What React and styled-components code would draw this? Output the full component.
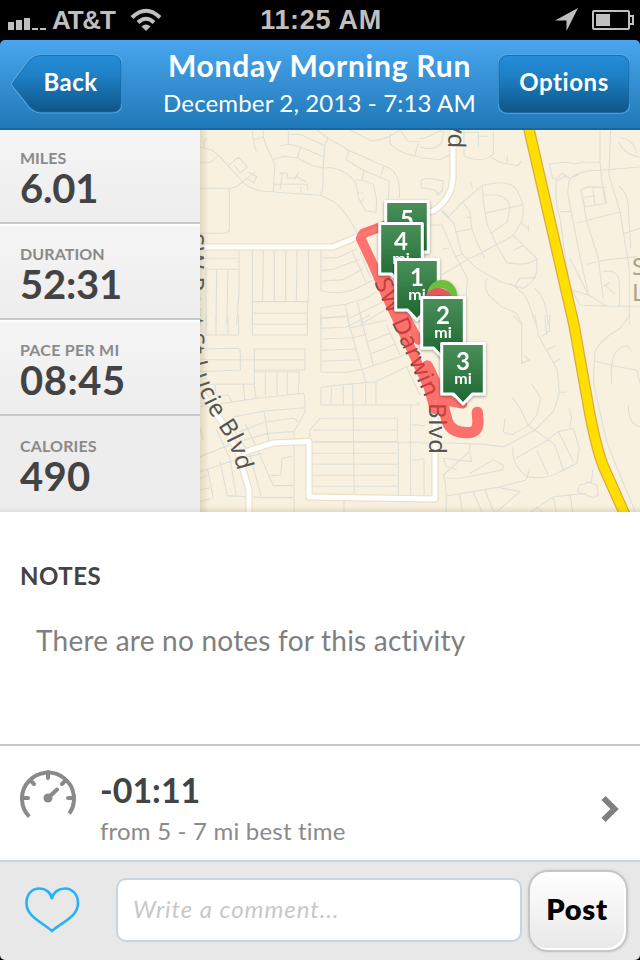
import React from "react";
import styled, { createGlobalStyle } from "styled-components";

const GlobalStyle = createGlobalStyle`
  * {
    box-sizing: border-box;
  }
  body {
    margin: 0;
    background: #000;
    font-family: "Lato", sans-serif;
  }
  h1, h2, h3, p {
    margin: 0;
  }
`;

const Screen = styled.div`
  width: 640px;
  height: 960px;
  display: flex;
  flex-direction: column;
  overflow: hidden;
  background: #000;
`;

const StatusBar = styled.div`
  height: 40px;
  display: grid;
  grid-template-columns: 1fr auto 1fr;
  align-items: center;
  padding: 0 6px 0 8px;
  color: #bfbfbf;
  font-family: "Liberation Sans", sans-serif;
  font-weight: 700;
  font-size: 26px;
  line-height: 40px;

  svg {
    display: block;
  }
`;
const Signal = styled.div`
  display: flex;
  align-items: center;

  span {
    width: 83px;
    letter-spacing: -1.2px;
    padding-left: 6px;
  }
`;
const Clock = styled.div`
  font-size: 27px;
  letter-spacing: 0.7px;
`;
const Power = styled.div`
  display: flex;
  justify-content: flex-end;
  align-items: center;
  gap: 13px;
`;

const Header = styled.header`
  height: 90px;
  flex: none;
  display: flex;
  justify-content: space-between;
  padding: 14px 10px 0 11px;
  border-radius: 5px 5px 0 0;
  border-bottom: 2px solid #1567a6;
  background: linear-gradient(#49a6ee, #2078b6);
  color: #fff;
`;
const Titles = styled.div`
  margin-left: 19px;
  text-align: center;
  white-space: nowrap;

  h1 {
    font-size: 30px;
    font-weight: 700;
    line-height: 36px;
    margin-top: -7px;
    letter-spacing: 0.75px;
  }
  p {
    font-size: 24px;
    line-height: 30px;
    margin-top: 5px;
    letter-spacing: 0.15px;
  }
`;
const HeaderButton = styled.button`
  position: relative;
  height: 60px;
  width: ${(props) => props.$width}px;
  padding: ${(props) => (props.$back ? "0 0 6px 8px" : "0 0 6px")};
  border: 0;
  background: none;
  color: #fff;
  font-family: inherit;
  font-size: 24px;
  font-weight: 700;
  letter-spacing: ${(props) => props.$spacing}px;

  svg {
    position: absolute;
    left: 0;
    top: 0;
  }
  span {
    position: relative;
  }
`;

const Summary = styled.section`
  height: 382px;
  flex: none;
  display: flex;
`;
const Stats = styled.div`
  width: 200px;
  display: flex;
  flex-direction: column;
  background: #ededed;
`;
const Stat = styled.div`
  height: 96px;
  padding: 19px 20px 0;
  background: linear-gradient(#f5f5f5, #ededed);
  border-top: 2px solid #fff;
  border-bottom: 2px solid #c8c8c8;

  &:first-child {
    height: 94px;
    border-top: 0;
  }
  &:last-child {
    padding-top: 21px;
    border: 0;
    background: linear-gradient(#ededed 94%, #e2e2e2);
  }
  h3 {
    font-size: 16px;
    font-weight: 700;
    line-height: 18px;
    color: #8a8a8a;
    letter-spacing: ${(props) => props.$labelSpacing}px;
  }
  p {
    font-size: 40px;
    font-weight: 700;
    line-height: 42px;
    color: #434343;
    letter-spacing: ${(props) => props.$spacing}px;
  }
`;
const MapArea = styled.div`
  flex: 1;

  svg {
    display: block;
  }
`;

const Notes = styled.section`
  height: 232px;
  flex: none;
  padding: 49px 20px 0;
  background: #fff;

  h2 {
    font-size: 24px;
    font-weight: 700;
    line-height: 30px;
    color: #434343;
    letter-spacing: 0.5px;
  }
  p {
    margin: 32px 0 0 16px;
    font-size: 28px;
    line-height: 34px;
    color: #7f7f7f;
    letter-spacing: 0.23px;
  }
`;
const BestTime = styled.section`
  height: 116px;
  flex: none;
  display: flex;
  padding: 22px 20px 0;
  border-top: 2px solid #c8c8c8;
  background: #fff;

  h2 {
    font-size: 34px;
    font-weight: 700;
    line-height: 42px;
    margin-top: 1px;
    color: #434343;
    letter-spacing: 0;
  }
  p {
    font-size: 24px;
    line-height: 30px;
    margin-top: 5px;
    color: #8a8a8a;
    letter-spacing: 0.2px;
  }
`;
const BestText = styled.div`
  flex: 1;
  margin-left: 24px;
`;
const Chevron = styled.svg`
  margin-top: 27px;
`;

const CommentBar = styled.footer`
  height: 100px;
  flex: none;
  display: flex;
  align-items: flex-start;
  padding: 8px 12px 0 24px;
  border-top: 2px solid #c8d3dd;
  border-radius: 0 0 5px 5px;
  background: #e8e8e8;
`;
const Heart = styled.svg`
  flex: none;
  margin: 16px 36px 0 0;
`;
const CommentInput = styled.input`
  width: 406px;
  height: 64px;
  margin-top: 8px;
  padding: 0 15px 3px;
  border: 2px solid #c8d5e1;
  border-radius: 10px;
  background: #fff;
  outline: 0;
  font-family: inherit;
  font-size: 24px;
  letter-spacing: 0.95px;

  &::placeholder {
    color: #c8c8c8;
    font-style: italic;
    opacity: 1;
  }
`;
const PostButton = styled.button`
  width: 100px;
  height: 82px;
  margin-left: 6px;
  padding: 0 2px 5px 0;
  border: 2px solid #c6c6c6;
  border-radius: 20px;
  background: linear-gradient(#fff, #e8e8e8);
  box-shadow: inset -2px -2px 0 #fff, 0 0 3px rgba(0, 0, 0, 0.12);
  color: #000;
  font-family: inherit;
  font-size: 29px;
  font-weight: 800;
  letter-spacing: 0.7px;
`;

const stats = [
  { label: "MILES", value: "6.01", spacing: -0.2, labelSpacing: 0 },
  { label: "DURATION", value: "52:31", spacing: -0.2, labelSpacing: 0.1 },
  { label: "PACE PER MI", value: "08:45", spacing: 0.5, labelSpacing: 0.25 },
  { label: "CALORIES", value: "490", spacing: 0.3, labelSpacing: 0.15 },
];

// side streets, grouped by quarter of the map
const northWest =
  "M0 66L35 75L60 95L80 118L110 150L135 178Q155 192 185 198L260 204L362 211L405 232Q440 262 474 328M0 112H32L55 92M12 66V50L18 38M0 190H88V318L75 325H0M88 190L108 186L135 165L165 142M84 122L115 97L142 126L120 144L102 120M146 142L170 155L162 173L136 158M156 18L164 66L169 80M163 44L190 36V18M190 36L200 66L225 118L220 202M220 104L250 94L292 98L302 66L370 95M240 62L268 58L302 66M265 18V56M265 28H300L375 62L385 36M350 15L385 40L446 76L550 122Q605 135 598 218M385 36L374 64L370 125L368 190L362 211M292 98Q330 124 368 128H395Q445 138 468 175L476 220L497 258L528 262L530 225L520 178L488 166H468M446 76L438 104L492 137L568 168L565 222M492 137L486 166M552 122L543 152M474 204H490M480 232L494 218M220 178H322V196M240 194L247 147L238 144H262V158L286 160L296 142M286 154L318 170M303 185V202M450 15L510 46Q550 50 600 15M570 25V55Q600 88 660 95M600 15L625 50H660M645 90L655 55" +
  "M0 370V375M18 435V600M0 400H116M0 433H116M117 372V500L110 600M50 435L48 600M84 435L80 600M157 375V600M190 375L188 530M223 375V530M257 375V530M291 375L289 530M325 375V530M157 530H322V600M157 565H322M363 375V497M363 400L412 398L470 372M363 436L400 433L480 402M363 469L430 464L488 432M363 497Q430 515 490 480L530 460M457 380L498 470M480 380L512 460M363 600V548L436 538L498 520L530 500M363 577H440M436 538L448 600M472 532L490 600M448 580L550 530M480 600L562 550";
const northEast =
  "M0 42Q30 35 48 22L68 18M0 66Q45 80 65 52L72 18M0 98L60 104L100 84M4 164L25 160L70 168L67 197L48 210M4 188L42 194L60 212M4 164V188M130 22H175V66M175 34H205M220 18V88Q190 112 150 100L132 92V15M214 98L240 112L294 122L304 108M262 94V112M150 170L158 190M65 255L85 276L128 231L187 182Q270 160 290 195Q320 245 305 290L280 332L182 385L140 405L65 450M187 182L190 230L202 300L230 360L260 413Q330 425 350 400L280 332M187 209L236 210Q268 222 270 250L262 290L212 325M198 264L305 240M128 231L150 260L155 310L170 350L194 400M140 276L155 279M105 322L158 311M65 260L102 295L125 385L170 430L240 470L310 490Q345 470 350 440V400M305 295L325 310M325 300V320M282 375L308 362M65 300H30M65 300L105 390L142 460L138 520M68 373L88 368M105 395L128 387M282 484L300 460L348 458M202 460Q190 480 205 510L245 545L290 565L307 600M270 475Q315 500 330 545L348 600M345 490Q380 520 385 600M388 116L398 162H410L425 145L450 160Q440 190 446 220L475 370L505 508M450 160Q480 135 540 136L660 126M388 116L440 112Q470 120 486 112H540M540 15V110L546 170L560 238M572 15L567 150L600 260L628 430V600M410 162Q402 230 420 280L448 480L480 540L556 544H660M450 160L478 148M440 150L412 168M482 195L505 185L560 188M482 195L490 230L500 290L535 400L550 520M482 195L495 245L556 236L548 186M486 218L525 212M518 185L525 240M470 294L596 262M420 260H455M498 418L560 404L650 395M610 326L660 310M596 182Q624 205 625 245L632 370M450 400L500 500M548 440Q600 430 598 480V544M555 480L586 508M552 484L570 472M440 490L505 510L560 544M595 50Q615 90 660 96M600 38Q640 40 650 85";
const southWest =
  "M18 0V58M48 0V60M84 0V60M116 0V60H0M157 0V28H322M157 28V60H322V0M0 102L114 100Q122 102 121 120V165L0 170M0 134H315M163 102V210L168 250M163 102H315V165H163M0 208H163M163 170H300M196 170V242M230 170L232 240M262 170V236M298 170L295 235M130 208L135 260M45 210L48 236M0 275L170 250L310 235Q316 236 315 290L282 350V600M10 243L85 240L98 265M100 306L192 288L314 278M120 350L192 322L280 310Q290 315 293 320M192 288L207 380M0 425L100 385L205 355L280 350M0 470L120 430L190 415M50 345L90 430L108 540M90 325L150 420L184 545M135 325L180 420L220 512H280M60 440L82 542L190 548H280M22 460L40 550M0 490L22 480M0 525L30 518M0 560L35 550M212 482L242 480L246 430L278 424M0 340L10 375M363 0V172M363 10H380L448 0M363 40L440 36L510 0M363 72L460 68L500 58M363 106L470 102M363 139L480 134M363 172H440L490 162L600 125L660 90M440 0L470 110L497 200V270M480 0L520 150M560 30L600 120M448 40L560 15M500 82L570 55M510 118L585 88M363 217L440 208L528 200L620 155L660 145M363 217V270H660M395 220L392 268M430 210V270M458 205L463 540M528 200V270M620 155L660 240M330 375V345L360 310H592V380H330M340 345H592M330 382H660M338 415H592M338 448H592M338 481H592M338 514H592M595 380V540M632 270V540M650 265H660M638 330H660M638 435H660M432 556V600";
const southEast =
  "M280 0L305 28V145L328 135L312 122M345 0L355 60L412 165L418 235L400 290L345 345L280 380L250 395L185 388L95 384H0M375 0L380 60M390 0L388 48L365 65M380 104L408 92M400 145L418 132M418 232H440M275 245L300 280L325 332L380 370L405 390L430 465M335 207L362 250L350 300L325 332L275 360L250 350L255 310M280 395Q270 445 320 485Q380 495 420 470L470 445L478 400L460 340Q435 345 415 350L375 380L288 430M415 350L460 440M350 405L385 480M448 280L455 310L448 340M150 387L148 410L70 480Q80 500 78 600M148 410L155 440L70 430L80 455L110 465M150 475L220 435L250 450L248 465L120 490L80 490M330 460L318 495L230 518L80 543M160 533L190 600M195 525L225 600M120 540L128 600M240 518L300 530L220 600M320 600L400 545L500 535M350 575L378 600M400 545L410 600M450 540L460 600M518 465L515 500L480 510L472 530L520 548L535 540L530 510L500 500M630 0L600 40Q540 75 525 110L520 200L560 380L600 480L650 600M525 138L600 157L650 165L660 205M575 205Q565 100 620 92L635 108M625 270Q625 330 660 335M0 432H12V540M0 332H15";

const markers = [
  { n: 5, x: 407, y: 200 },
  { n: 4, x: 401, y: 222 },
  { n: 1, x: 417, y: 258 },
];
const topMarkers = [
  { n: 2, x: 443, y: 296 },
  { n: 3, x: 463, y: 342 },
];

function MileMarker({ n, x, y }) {
  return (
    <g transform={`translate(${x} ${y})`} filter="url(#shade)">
      <path
        d="M-21.3 1.5H21.3V52H9.5L0 62L-9.5 52H-21.3Z"
        fill="url(#green)"
        stroke="#fff"
        strokeWidth="3"
        strokeLinejoin="round"
      />
      <g fill="#fff" textAnchor="middle" fontFamily="Lato" fontWeight="700">
        <text y="28" fontSize="24">{n}</text>
        <text y="42" fontSize="16">mi</text>
      </g>
    </g>
  );
}

function RouteMap() {
  return (
    <svg width="440" height="382" viewBox="200 130 440 382">
      <defs>
        <linearGradient id="green" x1="0" y1="0" x2="0" y2="1">
          <stop offset="0" stopColor="#4a905b" />
          <stop offset="1" stopColor="#1e6630" />
        </linearGradient>
        <linearGradient id="edge">
          <stop offset="0" stopColor="#8a7d55" stopOpacity=".22" />
          <stop offset="1" stopColor="#8a7d55" stopOpacity="0" />
        </linearGradient>
        <linearGradient id="floor" x1="0" y1="1" x2="0" y2="0">
          <stop offset="0" stopColor="#8a7d55" stopOpacity=".2" />
          <stop offset="1" stopColor="#8a7d55" stopOpacity="0" />
        </linearGradient>
        <filter id="shade" x="-20%" y="-20%" width="140%" height="140%">
          <feDropShadow dx="0" dy="1" stdDeviation="1.5" floodOpacity=".4" />
        </filter>
        <path id="lucie" d="M187 233V335Q188 372 208 410L222 432Q232 448 237 469" />
        <path id="darwin" d="M374 282L395 330L427 402" />
      </defs>
      <rect x="200" y="130" width="440" height="382" fill="#f8f1df" />
      <g fill="none" stroke="#dddfd7" strokeWidth="3.2">
        <path transform="translate(200 125) scale(.3333)" d={northWest} />
        <path transform="translate(420 125) scale(.3333)" d={northEast} />
        <path transform="translate(200 315) scale(.3333)" d={southWest} />
        <path transform="translate(420 315) scale(.3333)" d={southEast} />
      </g>
      {[
        { color: "#e9e1c8", width: 7.5 },
        { color: "#fff", width: 5 },
      ].map((road) => (
        <g key={road.color} fill="none" stroke={road.color} strokeWidth={road.width} strokeLinejoin="round">
          <path d="M200 247H333L362 235L410 216L433 211Q444 205 451 190L453 178V130" />
          <path d="M200 390L222 422L238 452L249 490V515" />
          <path d="M242 453L273 443L309 441.500V497L435 499V400" />
        </g>
      ))}
      <g fill="none">
        <path d="M528 125L574 325L590 415Q598 455 605 470L626 517" stroke="#dcaa3e" strokeWidth="11.500" />
        <path d="M528 125L574 325L590 415Q598 455 605 470L626 517" stroke="#ffdf00" strokeWidth="9" />
      </g>
      <g
        fill="#555553"
        stroke="#fbf6e8"
        strokeWidth="2"
        paintOrder="stroke"
        fontFamily="Noto Sans"
        fontSize="24"
      >
        <text><textPath href="#lucie" textLength="249">SW Port St Lucie Blvd</textPath></text>
        <text><textPath href="#darwin" textLength="127">SW Darwin</textPath></text>
        <text transform="translate(428.500 403) rotate(90)" textLength="51">Blvd</text>
        <text transform="translate(448 148) rotate(92)" textAnchor="end">Blvd</text>
      </g>
      <g fill="#aca484" fontFamily="Noto Sans" fontSize="24">
        <text x="632" y="275">St</text>
        <text x="632" y="301">Lucie</text>
      </g>
      <g
        transform="translate(350 190) scale(.3333)"
        fill="none"
        stroke="#ff3333"
        strokeLinecap="round"
        strokeLinejoin="round"
        opacity=".67"
      >
        <path d="M150 90L40 130L32 145L65 215L110 320L180 470L235 590L254 658" strokeWidth="29" />
        <path d="M100 250L150 350L205 450" strokeWidth="28" />
        <path d="M232 528L262 590L280 650L292 695Q305 728 350 728Q384 730 384 695L382 667" strokeWidth="34" />
        <path d="M270 590L300 635L338 642" strokeWidth="28" />
      </g>
      {markers.map((m) => (
        <MileMarker key={m.n} {...m} />
      ))}
      <g filter="url(#shade)">
        <circle cx="442" cy="295" r="15" fill="#6fbe3f" />
        <circle cx="442" cy="293.500" r="5.500" fill="#c5e6b4" />
        <circle cx="438.300" cy="302.500" r="14.500" fill="#e2585c" />
        <circle cx="438.300" cy="300" r="5" fill="#c9474c" />
      </g>
      {topMarkers.map((m) => (
        <MileMarker key={m.n} {...m} />
      ))}
      <rect x="200" y="130" width="9" height="382" fill="url(#edge)" />
      <rect x="200" y="506" width="440" height="6" fill="url(#floor)" />
    </svg>
  );
}

function ButtonShape({ width, d, id }) {
  return (
    <svg width={width} height="60" viewBox={`0 0 ${width} 60`}>
      <defs>
        <linearGradient id={id} x1="0" y1="0" x2="0" y2="1">
          <stop offset="0" stopColor="#258cd8" />
          <stop offset=".35" stopColor="#1e80c6" />
          <stop offset="1" stopColor="#0e5587" />
        </linearGradient>
      </defs>
      <path d={d} fill="none" stroke="#59aeea" strokeOpacity=".75" strokeWidth="3" />
      <path d={d} fill={`url(#${id})`} stroke="#17649e" strokeOpacity=".8" />
    </svg>
  );
}

function App() {
  return (
    <>
      <GlobalStyle />
      <Screen>
        <StatusBar>
          <Signal>
            <svg width="38" height="20" fill="#bfbfbf">
              <path d="M0 12h6v8H0zM8 10h6v10H8zM16 8h6v12h-6zM24 18h6v2h-6zM32 18h6v2h-6z" />
            </svg>
            <span>AT&amp;T</span>
            <svg width="34" height="24" viewBox="0 0 34 24" fill="none" stroke="#bfbfbf" strokeWidth="4">
              <path d="M3 9.500Q17 -4 31 9.500M9 14.500Q17 7 25 14.500" />
              <path d="M17 23L12.500 18.500Q17 14.500 21.500 18.500Z" fill="#bfbfbf" stroke="none" />
            </svg>
          </Signal>
          <Clock>11:25 AM</Clock>
          <Power>
            <svg width="24" height="24" viewBox="0 0 24 24" fill="#bfbfbf">
              <path d="M23 0L11.500 23V12.500H0Z" />
            </svg>
            <svg width="42" height="20" viewBox="0 0 42 20" fill="none" stroke="#bfbfbf" strokeWidth="2">
              <path d="M2 1H36Q37 1 37 2V18Q37 19 36 19H2Q1 19 1 18V2Q1 1 2 1ZM38 6H41V14H38" />
              <path d="M4 4H18V16H4Z" fill="#bfbfbf" stroke="none" />
            </svg>
          </Power>
        </StatusBar>
        <Header>
          <HeaderButton $width={111} $back $spacing={0.4}>
            <ButtonShape
              id="back"
              width={111}
              d="M1 30L19 6Q24 1.500 29 1.500H101Q110 1.500 110 10.500V49Q110 58 101 58H29Q24 58 19 53Z"
            />
            <span>Back</span>
          </HeaderButton>
          <Titles>
            <h1>Monday Morning Run</h1>
            <p>December 2, 2013 - 7:13 AM</p>
          </Titles>
          <HeaderButton $width={132} $spacing={0.6}>
            <ButtonShape
              id="options"
              width={132}
              d="M10 1.500H122Q131 1.500 131 10.500V49Q131 58.500 122 58.500H10Q1 58.500 1 49V10.500Q1 1.500 10 1.500Z"
            />
            <span>Options</span>
          </HeaderButton>
        </Header>
        <Summary>
          <Stats>
            {stats.map((stat) => (
              <Stat key={stat.label} $spacing={stat.spacing} $labelSpacing={stat.labelSpacing}>
                <h3>{stat.label}</h3>
                <p>{stat.value}</p>
              </Stat>
            ))}
          </Stats>
          <MapArea>
            <RouteMap />
          </MapArea>
        </Summary>
        <Notes>
          <h2>NOTES</h2>
          <p>There are no notes for this activity</p>
        </Notes>
        <BestTime>
          <svg width="56" height="54" viewBox="0 0 56 54" fill="none" stroke="#8a8a8a" strokeWidth="4">
            <path d="M9.300 48.700A26 26 0 1 1 49.300 45.500" />
            <path
              d="M28 4V10M10.500 12.500L14 16M45.500 12.500L42 16M3 30H8M48 30H53M28 30L37 21.500"
              strokeLinecap="round"
            />
            <circle cx="28" cy="30" r="4.500" fill="#8a8a8a" stroke="none" />
          </svg>
          <BestText>
            <h2>-01:11</h2>
            <p>from 5 - 7 mi best time</p>
          </BestText>
          <Chevron width="20" height="28" viewBox="0 0 20 28" fill="none" stroke="#808080" strokeWidth="6">
            <path d="M3.500 3L14.500 14L3.500 25" />
          </Chevron>
        </BestTime>
        <CommentBar>
          <Heart width="56" height="48" viewBox="0 0 56 48" fill="none" stroke="#27b1f9" strokeWidth="2.600">
            <path d="M28 13C27 6 21 2.500 15.500 2.500C7 2.500 2.500 9 2.500 17C2.500 31 18 36 28 45C38 36 54 31 54 17C54 9 49 2.500 41 2.500C35 2.500 29 6 28 13Z" />
          </Heart>
          <CommentInput placeholder="Write a comment..." />
          <PostButton>Post</PostButton>
        </CommentBar>
      </Screen>
    </>
  );
}

export default App;
